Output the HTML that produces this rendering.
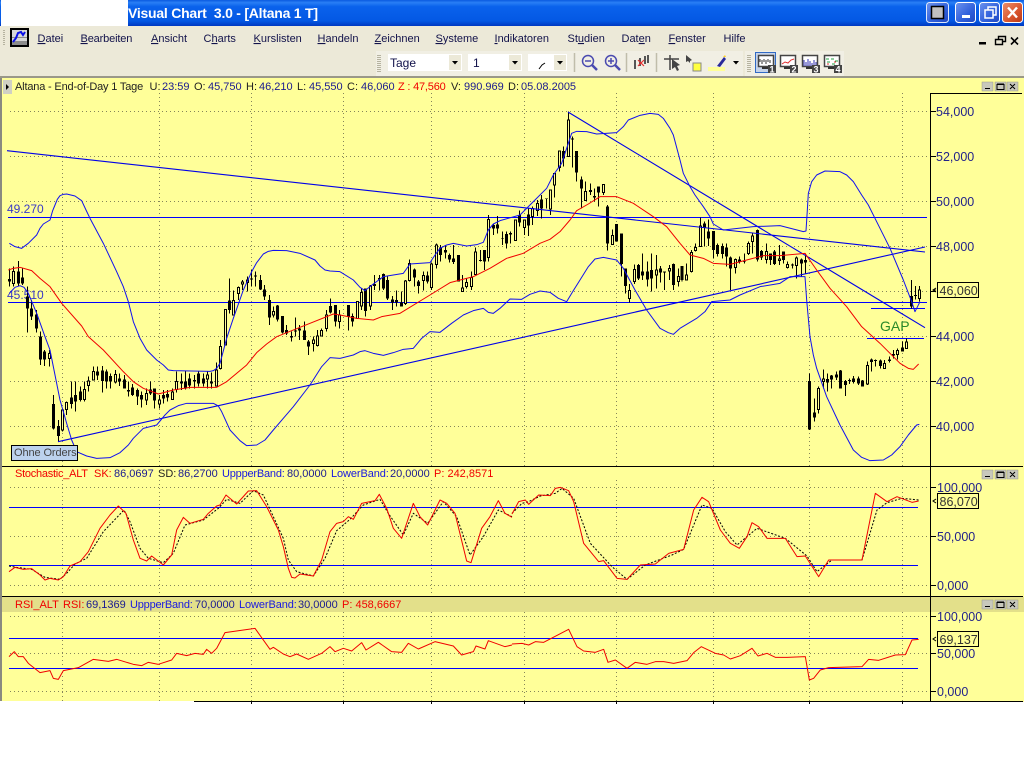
<!DOCTYPE html>
<html><head><meta charset="utf-8"><title>Visual Chart</title>
<style>html,body{margin:0;padding:0;background:#fff;width:1024px;height:768px;overflow:hidden}svg{display:block;font-family:"Liberation Sans",sans-serif}</style></head>
<body>
<svg width="1024" height="768" viewBox="0 0 1024 768" xmlns="http://www.w3.org/2000/svg">
<defs>
<linearGradient id="tb" x1="0" y1="0" x2="0" y2="1"><stop offset="0" stop-color="#0A5AE0"/><stop offset=".1" stop-color="#2A7FF5"/><stop offset=".25" stop-color="#0A62EC"/><stop offset=".8" stop-color="#0458E4"/><stop offset="1" stop-color="#0038C0"/></linearGradient>
<linearGradient id="bb" x1="0" y1="0" x2="1" y2="1"><stop offset="0" stop-color="#6E94EE"/><stop offset=".6" stop-color="#2F5FDB"/><stop offset="1" stop-color="#2048C0"/></linearGradient>
<linearGradient id="rb" x1="0" y1="0" x2="1" y2="1"><stop offset="0" stop-color="#EC8F6C"/><stop offset=".6" stop-color="#D8542C"/><stop offset="1" stop-color="#B83818"/></linearGradient>
</defs>
<!-- title bar -->
<rect x="0" y="0" width="1024" height="26" fill="url(#tb)"/>
<rect x="1" y="0" width="127" height="27.5" fill="#fff"/>
<text x="128" y="18" font-size="14" font-weight="bold" fill="#fff" xml:space="preserve" textLength="190">Visual Chart  3.0 - [Altana 1 T]</text>
<rect x="926.5" y="2.5" width="22" height="20" rx="3" fill="url(#bb)" stroke="#dfe8fa"/>
<rect x="931.5" y="6.5" width="12" height="12" fill="#c0c0c0" stroke="#000" stroke-width="1.5"/>
<rect x="955.5" y="2.5" width="20" height="20" rx="3" fill="url(#bb)" stroke="#fff"/>
<rect x="962" y="15" width="8" height="3" fill="#fff"/>
<rect x="979.5" y="2.5" width="20" height="20" rx="3" fill="url(#bb)" stroke="#fff"/>
<path d="M985 10h8v8h-8zM988 10V7h8v8h-3" fill="none" stroke="#fff" stroke-width="1.5"/>
<rect x="1002.5" y="2.5" width="20" height="20" rx="3" fill="url(#rb)" stroke="#fff"/>
<path d="M1008 7.5l9 10M1017 7.5l-9 10" stroke="#fff" stroke-width="2.4"/>
<!-- menu -->
<rect x="0" y="26" width="1024" height="50" fill="#ECE9D8"/>
<path d="M4 30V46" stroke="#b5b29f" stroke-width="2" stroke-dasharray="1 1"/>
<rect x="10" y="28" width="19" height="19" fill="#000"/>
<rect x="12" y="30" width="15" height="15" fill="#d8d8d8"/>
<path d="M12 41h15v4H12zM12 37h15v1H12z" fill="#8c8c8c"/>
<path d="M13 42l3-4 2-5 3-1 2 3 2-3" fill="none" stroke="#0a10e8" stroke-width="2"/>
<g font-size="11" fill="#12124a">
<text x="37.5" y="42"><tspan text-decoration="underline">D</tspan>atei</text>
<text x="80.5" y="42" letter-spacing="-.15"><tspan text-decoration="underline">B</tspan>earbeiten</text>
<text x="151" y="42"><tspan text-decoration="underline">A</tspan>nsicht</text>
<text x="203.5" y="42">C<tspan text-decoration="underline">h</tspan>arts</text>
<text x="253.5" y="42"><tspan text-decoration="underline">K</tspan>urslisten</text>
<text x="317.5" y="42"><tspan text-decoration="underline">H</tspan>andeln</text>
<text x="374.5" y="42"><tspan text-decoration="underline">Z</tspan>eichnen</text>
<text x="435.5" y="42"><tspan text-decoration="underline">S</tspan>ysteme</text>
<text x="494.5" y="42"><tspan text-decoration="underline">I</tspan>ndikatoren</text>
<text x="567.5" y="42">St<tspan text-decoration="underline">u</tspan>dien</text>
<text x="621.5" y="42">Dat<tspan text-decoration="underline">e</tspan>n</text>
<text x="668.5" y="42"><tspan text-decoration="underline">F</tspan>enster</text>
<text x="723.5" y="42">Hilfe</text>
</g>
<path d="M979 42h7v2.500h-7z" fill="#000"/>
<path d="M995.500 39.500h7v5h-7zM998.500 39.500v-3h7v5h-3" fill="none" stroke="#000" stroke-width="1.400"/>
<path d="M1011 37.500l7 7M1018 37.500l-7 7" stroke="#000" stroke-width="1.600"/>
<!-- toolbar -->
<rect x="376" y="51" width="367" height="25" fill="#F1EFE4"/>
<rect x="745" y="51" width="99" height="25" fill="#F1EFE4"/>
<path d="M379 55V72M749 55V72" stroke="#b5b29f" stroke-width="4" stroke-dasharray="1 1"/>
<rect x="388" y="54" width="74" height="17" fill="#fff"/>
<rect x="449" y="55" width="12" height="15" fill="#ECE9D8"/>
<rect x="468" y="54" width="54" height="17" fill="#fff"/>
<rect x="509" y="55" width="12" height="15" fill="#ECE9D8"/>
<rect x="528" y="54" width="39" height="17" fill="#fff"/>
<rect x="554" y="55" width="12" height="15" fill="#ECE9D8"/>
<path d="M452 61h6l-3 3.500zM512 61h6l-3 3.500zM557 61h6l-3 3.500zM733 61h6l-3 3.500z" fill="#000"/>
<text x="390" y="67" font-size="12" fill="#12124a">Tage</text>
<text x="473" y="67" font-size="12" fill="#12124a">1</text>
<path d="M539 69l3-4 3-2" fill="none" stroke="#000"/>
<path d="M574.500 53V72M626.500 53V72M656.500 53V72" stroke="#c0bdaa" stroke-width="1.500"/>
<g fill="none" stroke="#4a4ab0" stroke-width="1.500">
<circle cx="588" cy="61" r="5.500"/><path d="M585 61h6"/>
<circle cx="611" cy="61" r="5.500"/><path d="M608 61h6M611 58v6"/>
</g>
<path d="M592 65l5 5M615 65l5 5" stroke="#4a4ab0" stroke-width="2.500"/>
<path d="M635 60v9M640 58v8M645 56v8M648 55v8" stroke="#555" stroke-width="2"/>
<path d="M638 60l6 6M644 60l-6 6" stroke="#e83030" stroke-width="1.200"/>
<path d="M664 59h15M670 55v15" stroke="#444" stroke-width="1.500"/>
<path d="M672 59l8 6-3 1 2 4-2 1-2-4-3 2z" fill="#444"/>
<path d="M686 55l6 5-2 1v2l-2-2-2 1z" fill="#444"/>
<rect x="693" y="63" width="8" height="8" fill="#ffff40" stroke="#888"/>
<rect x="708" y="67" width="17" height="4" fill="#ffff99"/>
<path d="M717 66l7-9 2 2-6 8z" fill="#2a2a9a"/><path d="M723 57l2-2 1 2z" fill="#ffd020"/>
<rect x="755.500" y="52.500" width="20" height="20" fill="#C6D3E8" stroke="#316AC5"/>
<g fill="none">
<rect x="758.500" y="55.500" width="15" height="11" fill="#fff" stroke="#444" stroke-width="1.500"/>
<rect x="780.500" y="55.500" width="15" height="11" fill="#fff" stroke="#444" stroke-width="1.500"/>
<rect x="802.500" y="55.500" width="15" height="11" fill="#fff" stroke="#444" stroke-width="1.500"/>
<rect x="824.500" y="55.500" width="15" height="11" fill="#fff" stroke="#444" stroke-width="1.500"/>
</g>
<path d="M760 59v3M762 60v4M764 59v3M766 60v4M768 59v3M770 60v3" stroke="#333"/>
<path d="M782 64l3-2 3 1 3-3 3-1" fill="none" stroke="#e03030"/>
<path d="M804 66v-6M806 66v-4M808 66v-7M810 66v-5M812 66v-3M814 66v-6M816 66v-4" stroke="#3030b0"/>
<path d="M826 59h3M831 59h3M835 61h3M827 62h3M832 64h3" stroke="#20a040"/><path d="M827 64h2M834 62h2" stroke="#e03030"/>
<path d="M762 68h8M784 68h8M806 68h8M828 68h8" stroke="#333" stroke-width="2"/>
<g fill="#444"><rect x="768" y="65" width="8" height="8"/><rect x="790" y="65" width="8" height="8"/><rect x="812" y="65" width="8" height="8"/><rect x="834" y="65" width="8" height="8"/></g>
<g font-size="9" font-weight="bold" fill="#fff"><text x="769.500" y="72.500">1</text><text x="791.500" y="72.500">2</text><text x="813.500" y="72.500">3</text><text x="835.500" y="72.500">4</text></g>
<!-- chart background -->
<rect x="0" y="76" width="1024" height="2" fill="#9a9888"/>
<rect x="0" y="78" width="1024" height="624" fill="#FFFF99"/>
<rect x="0" y="701" width="194" height="1" fill="#fff"/>
<rect x="0" y="78" width="2" height="623" fill="#8a8a80"/>
<rect x="2" y="597" width="1022" height="15" fill="#E3E08A"/>
<rect x="3" y="80" width="9" height="14" fill="#d0d0c4"/><path d="M6 84l3 3-3 3z" fill="#000"/>
<!-- grid -->
<g stroke="#85855a" stroke-width="1" stroke-dasharray="1 3" fill="none" shape-rendering="crispEdges">
<path d="M10 111.500H930M10 156.500H930M10 201.500H930M10 246.500H930M10 291.500H930M10 336.500H930M10 381.500H930M10 426.500H930M10 487.500H930M10 536.500H930M10 585.500H930M10 616.500H930M10 653.500H930M10 691.500H930"/>
<path d="M62.500 93V466M159.500 93V466M251.500 93V466M343.500 93V466M431.500 93V466M524.500 93V466M616.500 93V466M713.500 93V466M809.500 93V466M902.500 93V466M62.500 480V596M159.500 480V596M251.500 480V596M343.500 480V596M431.500 480V596M524.500 480V596M616.500 480V596M713.500 480V596M809.500 480V596M902.500 480V596M62.500 612V701M159.500 612V701M251.500 612V701M343.500 612V701M431.500 612V701M524.500 612V701M616.500 612V701M713.500 612V701M809.500 612V701M902.500 612V701"/>
</g>
<!-- horizontal levels -->
<g stroke="#0000FF" stroke-width="1" shape-rendering="crispEdges">
<path d="M8 217.500H927M8 302.500H927M871 308.500H925M867 338.500H924M9 507.500H918M9 565.500H918M9 638.500H918M9 668.500H918"/>
</g>
<g font-size="12" fill="#3a3ac8"><text x="7" y="213">49.270</text><text x="7" y="299">45.510</text></g>
<!-- candles -->
<g transform="translate(0 80) scale(.33333)" shape-rendering="crispEdges">
<path fill="none" stroke="#000" stroke-width="3" d="M28 565V620M40 560V620M55 543V620M67 565V615M82 620V758M94 660V720M110 690V758M122 755V855M134 810V858M148 810V860M160 945V1048M175 1020V1085M187 985V1055M199 965V1005M214 905V985M226 905V995M241 920V965M253 905V965M265 890V935M280 860V900M292 860V900M307 858V938M319 868V925M332 880V925M347 870V910M359 880V918M373 885V925M385 905V950M397 912V948M412 925V975M424 935V982M439 925V975M451 905V945M463 925V985M478 945V985M490 930V970M502 930V965M517 925V960M529 875V938M544 880V930M556 872V928M568 880V925M583 885V925M595 875V920M610 880V920M622 875V925M634 878V925M649 848V920M661 780V868M676 687V795M688 595V700M700 632V705M715 620V660M727 600V630M742 590V635M754 570V620M766 575V620M781 585V630M793 615V660M808 645V735M820 680V712M832 675V725M847 708V760M859 735V765M874 755V785M886 712V770M898 735V780M913 725V780M925 780V825M940 770V815M952 750V800M964 745V770M979 690V755M991 655V700M1006 675V740M1018 690V745"/>
<path fill="none" stroke="#000" stroke-width="9" d="M28 597V605M55 575V610M67 592V610M82 650V685M94 685V710M110 703V745M122 770V838M134 815V838M160 972V1045M175 1038V1068M214 952V972M226 945V965M241 935V960M292 875V887M307 872V903M319 875V905M332 888V905M359 895V905M373 898V925M385 930V934M397 922V945M412 930V950M424 945V958M451 928V940M463 925V962M490 945V955M502 942V952M544 904V910M556 905V925M568 895V917M583 900V905M595 880V910M610 895V910M634 904V910M688 662V690M754 595V599M766 587V590M781 600V628M793 628V650M808 660V712M832 677V718M847 708V757M859 750V760M874 768V773M886 752V755M898 745V752M913 752V780M925 785V800M991 678V698M1006 675V725"/>
<path fill="#FFFF99" stroke="#000" stroke-width="3" d="M37 575h6v35h-6zM145 820h6v16h-6zM184 990h6v60h-6zM196 968h6v20h-6zM250 928h6v30h-6zM262 903h6v14h-6zM277 875h6v25h-6zM344 884h6v22h-6zM436 940h6v20h-6zM475 960h6v12h-6zM514 936h6v22h-6zM526 905h6v23h-6zM619 885h6v12h-6zM646 870h6v48h-6zM658 800h6v65h-6zM673 688h6v107h-6zM697 662h6v43h-6zM712 623h6v17h-6zM724 606h6v6h-6zM739 600h6v8h-6zM817 694h6v11h-6zM937 780h6v10h-6zM949 768h6v29h-6zM961 752h6v16h-6zM976 705h6v40h-6zM1015 705h6v20h-6z"/>
</g>
<g transform="translate(340 80) scale(.33333)" shape-rendering="crispEdges">
<path fill="none" stroke="#000" stroke-width="3" d="M25 675V752M37 700V740M52 665V715M64 625V690M76 625V710M91 615V690M103 585V630M118 585V632M130 580V630M142 590V660M157 648V690M169 632V680M184 635V680M196 600V675M208 538V605M223 565V620M235 600V640M250 575V632M262 575V610M274 548V630M289 490V565M301 495V545M316 495V535M328 520V548M340 495V552M355 525V605M367 585V635M379 595V625M394 575V630M406 503V585M421 510V545M433 510V570M445 405V545M460 430V465M472 408V460M487 455V495M499 455V505M511 455V490M526 420V483M538 392V440M553 420V465M565 385V468M577 380V435M592 360V408M604 345V415M619 355V385M631 330V405M643 280V352M658 213V275M670 200V260M685 95V230M697 170V262M709 213V305M724 290V385M736 305V362M751 310V345M763 325V365M775 320V380M790 313V345M802 375V512M817 448V495M829 432V485M844 460V590M856 565V640M868 612V668M883 553V612M895 552V600M907 520V600M922 545V620M934 520V635M949 525V625M961 558V608M973 575V630M988 555V600M1000 550V630M1015 565V620"/>
<path fill="none" stroke="#000" stroke-width="9" d="M25 675V710M37 708V725M76 625V693M103 612V618M118 594V598M130 582V625M142 600V655M157 658V668M169 660V668M184 668V680M223 568V592M235 604V618M262 586V604M301 502V525M316 510V518M328 525V538M340 535V546M355 525V605M421 540V543M433 510V545M460 435V445M472 433V445M487 475V477M499 462V490M511 459V464M538 405V428M565 403V437M604 358V385M619 355V357M670 213V235M697 175V178M709 213V278M724 298V326M751 330V336M763 348V352M775 320V338M802 380V490M829 432V485M844 460V552M856 565V618M895 555V595M907 574V586M922 575V598M934 570V595M961 565V578M973 575V578M1000 552V615"/>
<path fill="#FFFF99" stroke="#000" stroke-width="3" d="M49 665h6v50h-6zM61 637h6v41h-6zM88 618h6v60h-6zM193 603h6v67h-6zM205 550h6v52h-6zM247 586h6v16h-6zM271 552h6v70h-6zM286 495h6v58h-6zM364 624h6v10h-6zM376 608h6v12h-6zM391 592h6v28h-6zM403 516h6v68h-6zM442 418h6v114h-6zM523 420h6v62h-6zM550 420h6v22h-6zM574 385h6v25h-6zM589 370h6v22h-6zM628 330h6v57h-6zM640 280h6v35h-6zM655 213h6v49h-6zM682 120h6v110h-6zM733 334h6v28h-6zM787 313h6v25h-6zM814 466h6v27h-6zM865 632h6v24h-6zM880 568h6v37h-6zM946 570h6v15h-6zM985 565h6v8h-6zM1012 590h6v14h-6z"/>
</g>
<g transform="translate(680 80) scale(.33333)" shape-rendering="crispEdges">
<path fill="none" stroke="#000" stroke-width="3" d="M6 558V605M19 550V600M34 510V578M46 490V515M61 412V500M73 425V500M85 418V498M100 453V535M112 490V530M127 490V535M139 490V560M151 530V630M166 535V580M178 530V550M193 520V550M205 485V525M217 458V520M232 448V545M244 510V540M259 490V550M271 520V555M283 510V555M298 495V555M310 515V550M322 545V565M337 550V565M349 530V595M364 535V590M376 520V580M388 880V1050M403 955V1025M415 920V1000M430 868V925M442 880V935M454 885V925M469 875V900M481 870V925M496 900V948M508 895V912M520 888V910M535 890V915M547 900V920M562 845V915M574 835V875M586 838V860M601 838V865M613 840V865M628 830V848M640 810V835M652 805V838M667 785V815M679 775V807M694 600V685M706 618V658M718 618V665"/>
<path fill="none" stroke="#000" stroke-width="9" d="M6 558V600M73 430V442M85 455V475M100 453V510M112 495V522M127 498V522M139 503V530M151 532V566M178 538V546M193 544V546M232 450V538M244 513V533M271 520V540M283 514V552M310 515V540M337 553V557M364 538V550M376 540V548M388 903V1048M403 998V1013M442 897V907M454 886V898M469 884V893M481 872V925M496 903V915M508 900V903M520 896V906M535 895V910M547 902V920M574 838V846M586 840V843M601 842V858M628 838V843M640 822V826M667 803V815M694 648V680M706 645V648"/>
<path fill="#FFFF99" stroke="#000" stroke-width="3" d="M16 585h6v15h-6zM31 518h6v57h-6zM43 502h6v10h-6zM58 438h6v62h-6zM163 538h6v25h-6zM202 490h6v30h-6zM214 468h6v17h-6zM256 514h6v24h-6zM295 537h6v5h-6zM319 553h6v10h-6zM346 534h6v23h-6zM412 925h6v63h-6zM427 897h6v8h-6zM559 856h6v56h-6zM610 850h6v15h-6zM649 812h6v12h-6zM676 786h6v19h-6zM715 630h6v25h-6z"/>
</g>
<!-- trend lines -->
<g stroke="#0000E8" stroke-width="1.100" fill="none">
<path d="M7 150.700L925 252M58 441.700L925 247M568 112L925 327.700"/>
</g>
<!-- bollinger -->
<g fill="none" stroke="#1010F0" stroke-width="3" stroke-linejoin="round">
<path transform="translate(0 80) scale(.33333)" d="M28 490L45 500 65 505 85 490 110 465 120 445 130 432 150 420 158 392 165 375 172 358 180 347 190 343 200 342 225 348 245 362 258 390 270 415 310 490 350 575 370 620 385 665 400 725 420 775 440 810 470 840 490 855 505 870 520 872 630 874 640 872 650 865 660 850 680 775 700 715 730 630 755 575 770 548 790 522 805 514 820 511 860 512 900 520 945 540 960 558 975 570 990 573 1020 575"/>
<path transform="translate(0 80) scale(.33333)" d="M28 640L45 622 60 617 72 622 85 640 110 700 135 770 150 810 165 885 180 960 200 1030 215 1080 230 1115 260 1128 290 1135 330 1133 360 1118 385 1095 400 1075 430 1045 470 1035 495 1005 510 990 535 977 560 970 640 970 655 978 665 995 690 1050 720 1082 740 1097 770 1095 795 1080 820 1050 850 1015 880 980 930 915 965 860 990 833 1020 835"/>
<path transform="translate(340 80) scale(.33333)" d="M0 575L40 600 60 622 75 632 100 612 130 590 190 580 210 552 270 548 285 525 300 505 320 495 340 490 380 498 410 494 430 487 445 450 460 432 480 422 540 405 580 365 620 325 640 285 665 250 680 205 695 160 710 154 740 155 770 162 830 158 850 140 865 120 900 106 930 100 955 103 970 115 990 145 1000 165 1020 240"/>
<path transform="translate(340 80) scale(.33333)" d="M0 835L40 825 60 815 75 812 100 820 130 826 160 818 190 808 220 805 245 775 270 755 300 757 335 730 370 705 400 692 430 685 445 697 460 700 480 685 510 657 545 658 570 643 600 633 630 637 655 655 680 665 700 632 720 600 745 560 765 537 790 532 830 540 850 565 885 630 920 690 960 745 985 758 1000 763 1020 745"/>
<path transform="translate(680 80) scale(.33333)" d="M0 240L10 280 30 320 45 345 70 380 90 410 100 432 130 450 220 440 300 437 370 455 378 453 382 390 385 340 395 305 410 285 435 273 480 275 500 285 520 305 545 345 565 375 590 425 630 505 670 600 695 665 705 695 720 665"/>
<path transform="translate(680 80) scale(.33333)" d="M0 745L50 715 75 695 95 665 150 660 180 645 240 620 300 610 330 590 375 590 380 660 390 770 400 825 410 865 440 950 480 1035 520 1110 545 1132 570 1142 610 1140 635 1125 660 1100 685 1065 710 1035 718 1033"/>
</g>
<!-- red MA -->
<g fill="none" stroke="#F00000" stroke-width="3" stroke-linejoin="round">
<path transform="translate(0 80) scale(.33333)" d="M25 570L40 565 60 562 95 572 120 595 150 620 185 670 245 738 265 770 310 810 370 875 400 905 430 925 475 942 520 930 570 922 650 922 680 905 740 855 770 818 800 792 830 770 900 742 1000 702 1020 705"/>
<path transform="translate(340 80) scale(.33333)" d="M0 705L50 715 100 720 125 710 180 700 270 645 330 608 400 590 450 565 500 535 550 520 600 490 630 478 660 455 690 420 710 392 745 372 780 350 830 350 880 370 940 410 980 440 1020 490"/>
<path transform="translate(680 80) scale(.33333)" d="M0 490L30 525 70 535 100 550 150 553 200 540 250 527 300 527 375 520 410 570 450 625 500 680 545 740 600 790 660 850 685 865 700 868 716 852"/>
</g>
<!-- stochastic -->
<g fill="none" stroke="#000" stroke-width="3" stroke-dasharray="6 5">
<path transform="translate(0 460) scale(.33333)" d="M27 318L50 322 95 328 135 352 180 358 200 340 225 312 260 295 310 215 372 150 390 185 420 265 445 295 490 308 520 280 555 195 610 180 655 145 680 118 720 130 760 92 790 105 850 235 865 300 890 335 940 348 975 295 1010 212 1050 178 1090 135 1140 118 1165 160 1210 225 1240 160 1283 190 1330 125 1370 170 1410 285 1450 230 1495 150 1536 170"/>
<path transform="translate(512 460) scale(.33333)" d="M0 160L30 130 50 125 85 108 130 100 150 85 185 115 235 250 300 320 345 358 400 315 480 285 515 268 570 135 600 145 640 215 675 255 735 205 820 235 885 288 915 335 960 300 1050 300 1095 150 1125 128 1170 115 1220 120"/>
</g>
<g fill="none" stroke="#F00000" stroke-width="3" stroke-linejoin="round">
<path transform="translate(0 460) scale(.33333)" d="M27 335L45 322 70 328 95 326 120 345 135 360 150 355 175 360 190 350 210 318 240 305 265 275 300 205 330 165 355 138 378 160 400 240 420 295 440 303 455 288 490 315 515 285 530 210 550 172 570 190 610 178 625 160 650 138 660 135 678 105 710 132 745 93 770 92 800 140 835 210 850 260 865 325 875 352 885 354 900 342 940 348 965 300 990 215 1010 190 1030 185 1045 170 1060 178 1085 130 1125 122 1138 103 1160 145 1180 205 1205 235 1240 130 1260 170 1283 195 1320 120 1340 130 1365 160 1400 303 1413 308 1445 205 1470 170 1495 122 1515 160 1536 172"/>
<path transform="translate(512 460) scale(.33333)" d="M0 162L20 125 40 120 50 133 80 105 115 107 130 85 145 82 170 92 185 125 215 250 260 305 275 302 315 355 345 358 385 315 430 312 470 280 515 268 545 150 570 112 590 125 625 210 655 250 682 265 705 230 720 188 740 200 765 235 820 235 855 290 880 288 920 350 950 300 1050 300 1090 100 1125 125 1155 110 1200 127 1220 123"/>
<path transform="translate(0 460) scale(.33333)" d="M27 590L43 575 55 590 70 590 85 610 120 638 150 632 160 655 175 658 190 632 235 623 280 598 325 604 350 598 400 613 425 617 445 607 475 613 515 600 530 580 560 587 585 580 610 583 620 568 635 580 650 565 675 518 765 505 810 568 820 562 850 582 870 590 890 582 925 598 965 580 990 560 1005 575 1030 565 1055 573 1085 548 1098 570 1135 547 1175 575 1205 577 1225 550 1255 567 1305 545 1360 558 1385 585 1420 575 1428 558 1455 567 1465 542 1515 560 1536 555"/>
<path transform="translate(512 460) scale(.33333)" d="M0 552L30 550 50 555 70 545 95 547 170 508 195 560 215 573 250 577 275 568 288 607 310 600 345 625 370 607 405 613 430 605 455 605 485 610 525 602 545 578 568 560 610 580 635 585 655 597 685 587 720 565 738 588 765 580 790 592 825 592 880 590 892 660 905 655 925 630 950 623 1050 620 1070 598 1100 601 1150 585 1180 584 1200 540 1220 538"/>
</g>
<!-- frames -->
<g stroke="#000" stroke-width="1" shape-rendering="crispEdges" fill="none">
<path d="M930.500 93V701M931 93.500H1022M2 466.500H1023M2 596.500H1023M194 701.500H1023"/>
<path d="M931 111.500h5M931 156.500h5M931 201.500h5M931 246.500h5M931 291.500h5M931 336.500h5M931 381.500h5M931 426.500h5M931 487.500h5M931 536.500h5M931 585.500h5M931 616.500h5M931 653.500h5M931 691.500h5"/>
<path d="M251.500 701v3M343.500 701v3M431.500 701v3M524.500 701v3M616.500 701v3M713.500 701v3M809.500 701v3M902.500 701v3"/>
</g>
<!-- axis labels -->
<g font-size="12.500" fill="#22228a">
<text x="936" y="116">54,000</text><text x="936" y="161">52,000</text><text x="936" y="206">50,000</text><text x="936" y="251">48,000</text><text x="936" y="341">44,000</text><text x="936" y="386">42,000</text><text x="936" y="431">40,000</text>
<text x="937" y="492">100,000</text><text x="937" y="541">50,000</text><text x="937" y="590">0,000</text>
<text x="937" y="621">100,000</text><text x="937" y="658">50,000</text><text x="937" y="696">0,000</text>
</g>
<g fill="#FFFF99" stroke="#000" shape-rendering="crispEdges">
<rect x="937.500" y="282.500" width="41" height="15"/><rect x="937.500" y="493.500" width="41" height="15"/><rect x="937.500" y="631.500" width="41" height="15"/>
</g>
<g font-size="12.500" fill="#333"><text x="939.500" y="295">46,060</text><text x="939.500" y="506">86,070</text><text x="939.500" y="644">69,137</text></g>
<path d="M936 288l-3 2 3 2M933 290h3M936 499l-3 2 3 2M936 637l-3 2 3 2" fill="none" stroke="#000"/>
<!-- small window buttons -->
<g fill="#c8c8bc" stroke="#9a9a8a" stroke-width=".5">
<rect x="982" y="82" width="11" height="9"/><rect x="995" y="82" width="11" height="9"/><rect x="1007" y="82" width="11" height="9"/>
<rect x="982" y="470" width="11" height="9"/><rect x="995" y="470" width="11" height="9"/><rect x="1007" y="470" width="11" height="9"/>
<rect x="982" y="600" width="11" height="9"/><rect x="995" y="600" width="11" height="9"/><rect x="1007" y="600" width="11" height="9"/>
</g>
<g fill="none" stroke="#000">
<path d="M985 88.500h5M997 84.500h7v5h-7zM997 84h7M1010 84l5 5M1015 84l-5 5"/>
<path d="M985 476.500h5M997 472.500h7v5h-7zM997 472h7M1010 472l5 5M1015 472l-5 5"/>
<path d="M985 606.500h5M997 602.500h7v5h-7zM997 602h7M1010 602l5 5M1015 602l-5 5"/>
</g>
<!-- header text -->
<g font-size="11">
<text y="90" fill="#222"><tspan x="15" letter-spacing="-.17">Altana - End-of-Day 1 Tage</tspan><tspan x="149.500">U:</tspan><tspan x="162" fill="#1a1a90">23:59</tspan><tspan x="194">O:</tspan><tspan x="208" fill="#1a1a90">45,750</tspan><tspan x="246">H:</tspan><tspan x="259" fill="#1a1a90">46,210</tspan><tspan x="297">L:</tspan><tspan x="309" fill="#1a1a90">45,550</tspan><tspan x="347">C:</tspan><tspan x="361" fill="#1a1a90">46,060</tspan><tspan x="398" fill="#f00000" letter-spacing="-.2">Z : 47,560</tspan><tspan x="451">V:</tspan><tspan x="464" fill="#1a1a90">990.969</tspan><tspan x="508">D:</tspan><tspan x="521" fill="#1a1a90">05.08.2005</tspan></text>
<text y="477"><tspan x="15" fill="#f00000" letter-spacing="-.25">Stochastic_ALT</tspan><tspan x="94" fill="#f00000">SK:</tspan><tspan x="114" fill="#1a1a90">86,0697</tspan><tspan x="158" fill="#222">SD:</tspan><tspan x="178" fill="#1a1a90">86,2700</tspan><tspan x="222" fill="#1818e0" letter-spacing="-.2">UppperBand:</tspan><tspan x="287" fill="#1a1a90">80,0000</tspan><tspan x="331" fill="#1818e0" letter-spacing="-.1">LowerBand:</tspan><tspan x="390" fill="#1a1a90">20,0000</tspan><tspan x="434" fill="#f00000">P: 242,8571</tspan></text>
<text y="608"><tspan x="15" fill="#f00000">RSI_ALT</tspan><tspan x="63" fill="#f00000">RSI:</tspan><tspan x="86" fill="#1a1a90">69,1369</tspan><tspan x="130" fill="#1818e0" letter-spacing="-.2">UppperBand:</tspan><tspan x="195" fill="#1a1a90">70,0000</tspan><tspan x="239" fill="#1818e0" letter-spacing="-.1">LowerBand:</tspan><tspan x="298" fill="#1a1a90">30,0000</tspan><tspan x="342" fill="#f00000">P: 458,6667</tspan></text>
</g>
<text x="880" y="331" font-size="14" fill="#2a8a2a">GAP</text>
<rect x="11.500" y="445.500" width="66" height="15" fill="#BCD2EE" stroke="#000" shape-rendering="crispEdges"/>
<text x="14" y="456" font-size="11" fill="#444" letter-spacing="-.1">Ohne Orders</text>
</svg>
</body></html>
